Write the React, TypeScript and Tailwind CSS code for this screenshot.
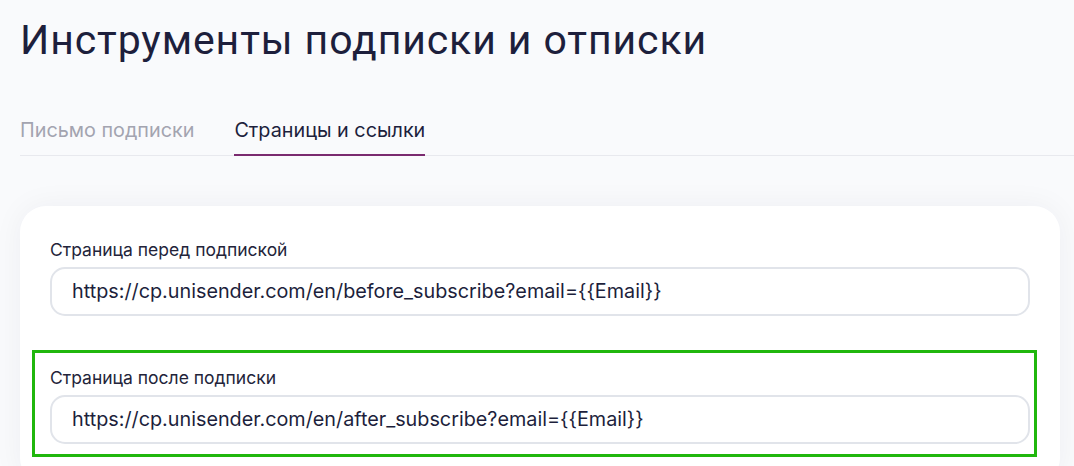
const fields = [
  {
    label: 'Страница перед подпиской',
    value: 'https://cp.unisender.com/en/before_subscribe?email={{Email}}',
    highlighted: false,
  },
  {
    label: 'Страница после подписки',
    value: 'https://cp.unisender.com/en/after_subscribe?email={{Email}}',
    highlighted: true,
  },
];

function Field({ label, value, highlighted }: { label: string; value: string; highlighted: boolean }) {
  const body = (
    <>
      <label className="block text-[17.5px] leading-6 text-[#23243a] mb-[5px]">{label}</label>
      <div className="h-[49px] flex items-center rounded-[15px] border-2 border-[#e1e4ea] bg-white pl-5 text-[19.8px] text-[#1d1f3c]">
        {value}
      </div>
    </>
  );

  // highlighted field gets a green outline that sticks out past the field
  if (highlighted) {
    return (
      <div className="-ml-[18px] -mr-[7px] -mt-[16px] -mb-[13px] border-[3px] border-[#20b70d] pl-[15px] pr-[4px] pt-[13px] pb-[10px]">
        {body}
      </div>
    );
  }
  return <div>{body}</div>;
}

export default function App() {
  return (
    <div
      className="min-h-screen bg-[#f9fafc] pt-4 overflow-hidden"
      style={{ fontFamily: 'Inter, "Noto Sans", sans-serif' }}
    >
      <h1
        className="pl-5 text-[41px] leading-12 font-normal tracking-[0.9px] text-[#1d1f3c]"
        style={{ fontFamily: 'Roboto, "Liberation Sans", sans-serif' }}
      >
        Инструменты подписки и отписки
      </h1>

      <div className="ml-5 mt-[52px] flex gap-10 border-b border-[#e8e9ee]">
        <button className="pb-[10px] text-[19.8px] leading-7 text-[#a3a4b0] border-b-2 border-transparent -mb-px">
          Письмо подписки
        </button>
        <button className="pb-[10px] text-[19.8px] leading-7 text-[#1d1f3c] border-b-2 border-[#7a2a6f] -mb-px">
          Страницы и ссылки
        </button>
      </div>

      <div className="ml-5 mr-[14px] mt-[50px] rounded-[26px] bg-white px-[30px] pt-8 pb-10 shadow-[0_0_30px_rgba(20,30,60,0.05)] flex flex-col gap-[50px]">
        {fields.map((f) => (
          <Field key={f.label} {...f} />
        ))}
      </div>
    </div>
  );
}
